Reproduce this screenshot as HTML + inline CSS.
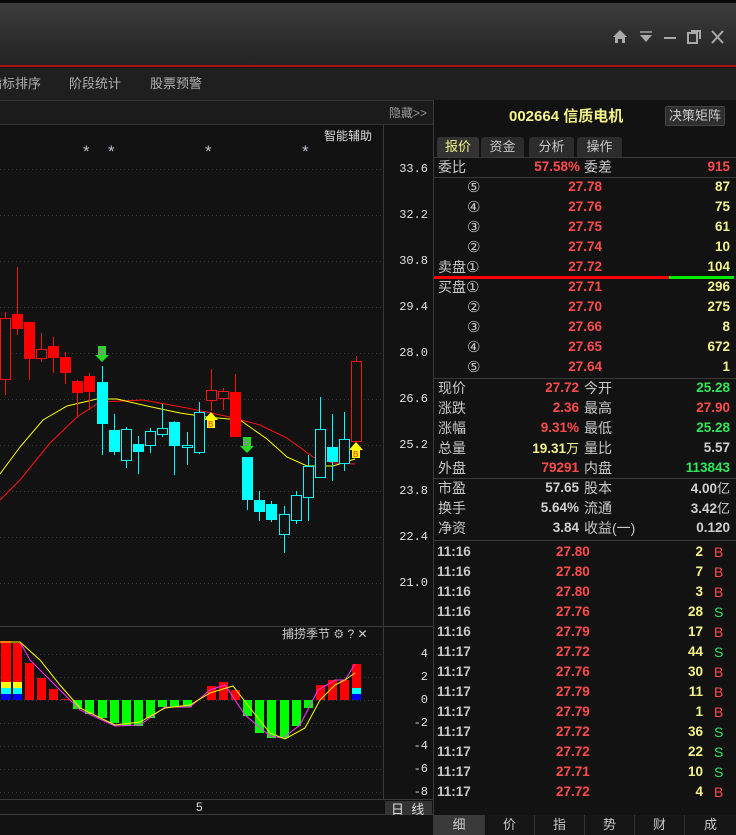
<!DOCTYPE html>
<html><head><meta charset="utf-8">
<style>
*{margin:0;padding:0;box-sizing:border-box}
body{width:736px;height:835px;background:#121212;overflow:hidden;position:relative;font-family:"Liberation Sans","Noto Sans CJK SC","DejaVu Sans",sans-serif;}
.a{position:absolute;white-space:nowrap}
.tb{left:0;top:0;width:736px;height:66px;background:linear-gradient(#3c3c3c,#222);border-top:3px solid #080808}
.menu{left:0;top:68px;width:736px;height:32px;background:#1f1f1f;color:#b0b0b0;font-size:13px;line-height:32px}
.rp{left:433px;top:100px;width:303px;height:735px;background:#121212;border-left:1px solid #3a3a3a}
.row{position:absolute;left:433px;width:303px;height:20px;line-height:20px;font-size:14px}
.row span{position:absolute;top:0;white-space:nowrap}
.row span span{position:static}
.l{left:5px;color:#c8c8c8}
.c{left:34px;color:#c8c8c8;font-family:"DejaVu Sans",sans-serif;font-size:15px}
.p{right:134px;color:#ff4b4b;font-weight:bold;font-size:13.5px}
.v{right:6px;color:#f3f38a;font-weight:bold;font-size:13.5px}
.p2{right:157px;font-weight:bold;font-size:13.5px}
.l2{left:151px;color:#c8c8c8}
.u{font-weight:normal;font-size:13px;font-family:"Noto Sans CJK SC",sans-serif}
.red{color:#ff4b4b}.grn{color:#2ee85a}.yel{color:#f3f38a}.wht{color:#d0d0d0}
.t{left:4px;color:#c8c8c8;font-weight:bold;font-size:13.5px}
.tp{left:123px;color:#ff4b4b;font-weight:bold;font-size:13.5px}
.tv{right:33px;color:#f3f38a;font-weight:bold;font-size:13.5px}
.bs{left:281px;font-size:14px}
.hl{position:absolute;left:433px;width:303px;height:1px;background:#3a3a3a}
.ax{color:#e0e0e0;font-size:12px;right:308px;font-family:"Liberation Mono",monospace}
.tab{position:absolute;top:137px;height:20px;background:#2c2c2c;color:#c8c8c8;font-size:13px;line-height:20px;text-align:center;border-radius:3px 3px 0 0}
.bt{position:absolute;top:815px;height:20px;width:50px;color:#c8c8c8;font-size:13px;line-height:20px;text-align:center;background:#161616;border-left:1px solid #333}
</style></head><body>
<div class="a tb"></div>
<div class="a" style="left:0;top:65px;width:736px;height:2px;background:#b01010"></div>
<svg class="a" style="left:608px;top:26px" width="128" height="24" viewBox="0 0 128 24">
<path d="M5 11 L12 4 L19 11 L17 11 L17 17 L14 17 L14 13 L10 13 L10 17 L7 17 L7 11Z" fill="#aaa"/>
<rect x="32" y="5" width="12" height="2" fill="#888"/><path d="M32 9 L44 9 L38 16Z" fill="#aaa"/>
<rect x="56" y="11" width="12" height="2" fill="#aaa"/>
<rect x="80" y="7" width="9" height="10" fill="none" stroke="#aaa" stroke-width="2"/><path d="M83 5 L92 5 L92 13" fill="none" stroke="#aaa" stroke-width="2"/>
<path d="M104 5 L115 17 M115 5 L104 17" stroke="#aaa" stroke-width="2"/>
</svg>
<div class="a menu"><span class="a" style="left:-11px">指标排序</span><span class="a" style="left:69px">阶段统计</span><span class="a" style="left:150px">股票预警</span></div>
<div class="a" style="left:0;top:100px;width:433px;height:25px;background:#1b1b1b;border-top:1px solid #333;border-bottom:1px solid #333"></div>
<div class="a" style="left:389px;top:104px;color:#999;font-size:12px">隐藏&gt;&gt;</div>

<svg class="a" style="left:0;top:0" width="433" height="835">
<g stroke="#3a3a3a" stroke-dasharray="1,3">
<line x1="0" x2="381" y1="169.5" y2="169.5"/><line x1="0" x2="381" y1="215.5" y2="215.5"/><line x1="0" x2="381" y1="261.5" y2="261.5"/><line x1="0" x2="381" y1="307.5" y2="307.5"/><line x1="0" x2="381" y1="353.5" y2="353.5"/><line x1="0" x2="381" y1="399.5" y2="399.5"/><line x1="0" x2="381" y1="445.5" y2="445.5"/><line x1="0" x2="381" y1="491.5" y2="491.5"/><line x1="0" x2="381" y1="537.5" y2="537.5"/><line x1="0" x2="381" y1="583.5" y2="583.5"/>
<line x1="0" x2="381" y1="654.5" y2="654.5"/><line x1="0" x2="381" y1="677.5" y2="677.5"/><line x1="0" x2="381" y1="700.5" y2="700.5"/><line x1="0" x2="381" y1="723.5" y2="723.5"/><line x1="0" x2="381" y1="746.5" y2="746.5"/><line x1="0" x2="381" y1="769.5" y2="769.5"/><line x1="0" x2="381" y1="792.5" y2="792.5"/>
</g>
<line x1="383.5" x2="383.5" y1="125" y2="800" stroke="#3a3a3a"/>
<line x1="0" x2="433" y1="626.5" y2="626.5" stroke="#3a3a3a"/>
<line x1="0" x2="433" y1="799.5" y2="799.5" stroke="#3a3a3a"/>
<line x1="0" x2="433" y1="814.5" y2="814.5" stroke="#3a3a3a"/>
<g fill="#bbc" font-size="17" font-family="Liberation Sans"><text x="83" y="157">*</text><text x="108" y="157">*</text><text x="205" y="157">*</text><text x="302" y="157">*</text></g>
<polyline fill="none" stroke="#ff1010" points="0,500 20,480 50,443 77,417 100,402 143,400 187,408 230,417 260,425 287,438 313,457 333,463 355,464"/>
<polyline fill="none" stroke="#ffff00" points="0,474 20,447 43,420 67,406 97,399 117,399 147,406 180,413 207,417 240,420 267,439 287,457 307,466 333,466 355,459"/>
<g stroke="#ff1010">
<line x1="5.5" x2="5.5" y1="312" y2="395"/><line x1="17.5" x2="17.5" y1="267" y2="335"/><line x1="29.5" x2="29.5" y1="322" y2="380"/><line x1="41.5" x2="41.5" y1="333" y2="362"/><line x1="53.5" x2="53.5" y1="337" y2="373"/><line x1="65.5" x2="65.5" y1="352" y2="384"/><line x1="77.5" x2="77.5" y1="380" y2="416"/><line x1="89.5" x2="89.5" y1="373" y2="410"/>
<line x1="211.5" x2="211.5" y1="369" y2="411"/><line x1="223.5" x2="223.5" y1="388" y2="410"/><line x1="235.5" x2="235.5" y1="374" y2="437"/><line x1="356.5" x2="356.5" y1="356" y2="441"/>
</g>
<g stroke="#00ffff">
<line x1="102.5" x2="102.5" y1="366" y2="455"/><line x1="114.5" x2="114.5" y1="414" y2="455"/><line x1="126.5" x2="126.5" y1="427" y2="468"/><line x1="138.5" x2="138.5" y1="436" y2="474"/><line x1="150.5" x2="150.5" y1="428" y2="453"/><line x1="162.5" x2="162.5" y1="404" y2="437"/><line x1="174.5" x2="174.5" y1="421" y2="475"/><line x1="187.5" x2="187.5" y1="432" y2="465"/><line x1="199.5" x2="199.5" y1="402" y2="454"/>
<line x1="247.5" x2="247.5" y1="457" y2="510"/><line x1="259.5" x2="259.5" y1="491" y2="521"/><line x1="271.5" x2="271.5" y1="501" y2="522"/><line x1="284.5" x2="284.5" y1="506" y2="553"/><line x1="296.5" x2="296.5" y1="491" y2="524"/><line x1="308.5" x2="308.5" y1="455" y2="521"/><line x1="320.5" x2="320.5" y1="397" y2="477"/><line x1="332.5" x2="332.5" y1="414" y2="481"/><line x1="344.5" x2="344.5" y1="412" y2="471"/>
</g>
<g fill="#ff0000">
<rect x="12" y="314" width="11" height="15"/><rect x="24" y="322" width="11" height="37"/><rect x="48" y="346" width="11" height="12"/><rect x="60" y="357" width="11" height="16"/><rect x="72" y="381" width="11" height="12"/><rect x="84" y="376" width="11" height="16"/><rect x="230" y="392" width="11" height="45"/>
</g>
<g fill="#121212" stroke="#ff1010">
<rect x="0.5" y="318.5" width="10" height="61"/><rect x="36.5" y="349.5" width="10" height="9"/><rect x="206.5" y="390.5" width="10" height="10"/><rect x="218.5" y="391.5" width="10" height="7"/><rect x="351.5" y="361.5" width="10" height="80"/>
</g>
<g fill="#00ffff">
<rect x="97" y="382" width="11" height="42"/><rect x="109" y="430" width="11" height="22"/><rect x="133" y="444" width="11" height="8"/><rect x="169" y="422" width="11" height="24"/><rect x="242" y="457" width="11" height="43"/><rect x="254" y="500" width="11" height="12"/><rect x="266" y="504" width="11" height="16"/><rect x="327" y="447" width="11" height="15"/>
</g>
<g fill="#121212" stroke="#00ffff">
<rect x="121.5" y="429.5" width="10" height="31"/><rect x="145.5" y="431.5" width="10" height="14"/><rect x="157.5" y="428.5" width="10" height="6"/><rect x="182.5" y="445.5" width="10" height="2"/><rect x="194.5" y="412.5" width="10" height="40"/><rect x="279.5" y="514.5" width="10" height="20"/><rect x="291.5" y="495.5" width="10" height="25"/><rect x="303.5" y="466.5" width="10" height="31"/><rect x="315.5" y="429.5" width="10" height="48"/><rect x="339.5" y="439.5" width="10" height="24"/>
</g>
<g><rect x="98" y="346" width="8" height="9" fill="#22dd22"/><path d="M95 355 L109 355 L102 362Z" fill="#22dd22"/><text x="98" y="355" font-size="9" fill="#e040e0" font-family="Liberation Sans">S</text></g>
<g><rect x="243" y="437" width="8" height="9" fill="#22dd22"/><path d="M240 446 L254 446 L247 453Z" fill="#22dd22"/><text x="243" y="446" font-size="9" fill="#e040e0" font-family="Liberation Sans">S</text></g>
<g><path d="M204 420 L211 412 L218 420Z" fill="#ffff00"/><rect x="207" y="420" width="8" height="8" fill="#ffff00"/><text x="208" y="427" font-size="8" fill="#ff2020" font-family="Liberation Sans">B</text></g>
<g><path d="M349 450 L356 442 L363 450Z" fill="#ffff00"/><rect x="352" y="450" width="8" height="8" fill="#ffff00"/><text x="353" y="457" font-size="8" fill="#ff2020" font-family="Liberation Sans">B</text></g>
<g fill="#ff0000">
<rect x="1" y="641" width="10" height="59"/><rect x="13" y="643" width="9" height="57"/><rect x="25" y="663" width="9" height="37"/><rect x="37" y="678" width="9" height="22"/><rect x="49" y="689" width="9" height="11"/><rect x="61" y="699" width="9" height="1"/>
<rect x="207" y="686" width="9" height="14"/><rect x="219" y="682" width="9" height="18"/><rect x="231" y="690" width="9" height="10"/><rect x="316" y="685" width="9" height="15"/><rect x="328" y="680" width="9" height="20"/><rect x="340" y="680" width="9" height="20"/><rect x="352" y="664" width="9" height="36"/>
</g>
<g fill="#ffff00"><rect x="1" y="682" width="10" height="6"/><rect x="13" y="682" width="9" height="6"/></g>
<g fill="#00ffff"><rect x="1" y="688" width="10" height="6"/><rect x="13" y="688" width="9" height="6"/><rect x="352" y="688" width="9" height="6"/></g>
<g fill="#0000ff"><rect x="1" y="694" width="10" height="6"/><rect x="13" y="694" width="9" height="6"/><rect x="352" y="694" width="9" height="6"/></g>
<g fill="#00ff00">
<rect x="73" y="700" width="9" height="9"/><rect x="85" y="700" width="9" height="14"/><rect x="98" y="700" width="9" height="18"/><rect x="110" y="700" width="9" height="23"/><rect x="122" y="700" width="9" height="26"/><rect x="134" y="700" width="9" height="26"/><rect x="146" y="700" width="9" height="18"/><rect x="158" y="700" width="9" height="7"/><rect x="170" y="700" width="9" height="7"/><rect x="183" y="700" width="9" height="7"/>
<rect x="243" y="700" width="9" height="16"/><rect x="255" y="700" width="9" height="33"/><rect x="267" y="700" width="9" height="38"/><rect x="280" y="700" width="9" height="38"/><rect x="292" y="700" width="9" height="26"/><rect x="304" y="700" width="9" height="8"/>
</g>
<polyline fill="none" stroke="#ff30ff" points="0,642 20,642 30,660 50,680 80,710 115,726 140,725 165,707 190,707 210,690 225,685 245,715 270,736 283,738 300,725 318,690 335,680 345,680 355,664"/>
<polyline fill="none" stroke="#ffff00" points="0,642 20,642 40,660 60,685 80,708 115,725 140,722 165,708 190,705 210,693 233,686 250,708 270,733 285,739 305,728 320,700 335,685 345,680 355,673"/>
<rect x="385" y="801" width="47" height="13" fill="#333"/>
</svg>
<div class="a" style="left:324px;top:127px;color:#ddd;font-size:12px">智能辅助</div>
<div class="a" style="left:282px;top:625px;color:#ccc;font-size:12px">捕捞季节 <span style="color:#bbb">⚙</span> ? ✕</div>
<div class="a ax" style="top:162px">33.6</div><div class="a ax" style="top:208px">32.2</div><div class="a ax" style="top:254px">30.8</div><div class="a ax" style="top:300px">29.4</div><div class="a ax" style="top:346px">28.0</div><div class="a ax" style="top:392px">26.6</div><div class="a ax" style="top:438px">25.2</div><div class="a ax" style="top:484px">23.8</div><div class="a ax" style="top:530px">22.4</div><div class="a ax" style="top:576px">21.0</div>
<div class="a ax" style="top:647px">4</div><div class="a ax" style="top:670px">2</div><div class="a ax" style="top:693px">0</div><div class="a ax" style="top:716px">-2</div><div class="a ax" style="top:739px">-4</div><div class="a ax" style="top:762px">-6</div><div class="a ax" style="top:785px">-8</div>
<div class="a" style="left:196px;top:800px;color:#ddd;font-size:12px">5</div>
<div class="a" style="left:391px;top:799px;color:#ddd;font-size:13px">日&nbsp;&nbsp;线</div>

<div class="a rp"></div>
<div class="a" style="left:509px;top:105px;color:#f3f38a;font-size:15px;font-weight:bold">002664 信质电机</div>
<div class="a" style="left:665px;top:106px;width:60px;height:20px;background:#2e2e2e;border:1px solid #444;border-radius:2px;color:#ccc;font-size:13px;line-height:18px;text-align:center">决策矩阵</div>
<div class="tab" style="left:437px;width:42px;color:#f3f38a;background:#333">报价</div>
<div class="tab" style="left:481px;width:43px">资金</div>
<div class="tab" style="left:529px;width:45px">分析</div>
<div class="tab" style="left:577px;width:45px">操作</div>
<div class="hl" style="top:157px"></div>

<div class="row" style="top:157px"><span class="l">委比</span><span class="p" style="right:156px">57.58%</span><span class="l2">委差</span><span class="v" style="color:#ff4b4b">915</span></div>
<div class="hl" style="top:177px"></div>
<div class="row" style="top:177px"><span class="c">⑤</span><span class="p">27.78</span><span class="v">87</span></div>
<div class="row" style="top:197px"><span class="c">④</span><span class="p">27.76</span><span class="v">75</span></div>
<div class="row" style="top:217px"><span class="c">③</span><span class="p">27.75</span><span class="v">61</span></div>
<div class="row" style="top:237px"><span class="c">②</span><span class="p">27.74</span><span class="v">10</span></div>
<div class="row" style="top:257px"><span class="l">卖盘<span style="font-family:'DejaVu Sans';font-size:15px">①</span></span><span class="p">27.72</span><span class="v">104</span></div>
<div class="a" style="left:434px;top:276px;width:235px;height:3px;background:#f00"></div>
<div class="a" style="left:669px;top:276px;width:65px;height:3px;background:#0e0"></div>
<div class="row" style="top:277px"><span class="l">买盘<span style="font-family:'DejaVu Sans';font-size:15px">①</span></span><span class="p">27.71</span><span class="v">296</span></div>
<div class="row" style="top:297px"><span class="c">②</span><span class="p">27.70</span><span class="v">275</span></div>
<div class="row" style="top:317px"><span class="c">③</span><span class="p">27.66</span><span class="v">8</span></div>
<div class="row" style="top:337px"><span class="c">④</span><span class="p">27.65</span><span class="v">672</span></div>
<div class="row" style="top:357px"><span class="c">⑤</span><span class="p">27.64</span><span class="v">1</span></div>
<div class="hl" style="top:378px"></div>
<div class="row" style="top:378px"><span class="l">现价</span><span class="p2 red">27.72</span><span class="l2">今开</span><span class="v grn">25.28</span></div>
<div class="row" style="top:398px"><span class="l">涨跌</span><span class="p2 red">2.36</span><span class="l2">最高</span><span class="v red">27.90</span></div>
<div class="row" style="top:418px"><span class="l">涨幅</span><span class="p2 red">9.31%</span><span class="l2">最低</span><span class="v grn">25.28</span></div>
<div class="row" style="top:438px"><span class="l">总量</span><span class="p2 yel">19.31<span class="u">万</span></span><span class="l2">量比</span><span class="v wht">5.57</span></div>
<div class="row" style="top:458px"><span class="l">外盘</span><span class="p2 red">79291</span><span class="l2">内盘</span><span class="v grn">113843</span></div>
<div class="hl" style="top:478px"></div>
<div class="row" style="top:478px"><span class="l">市盈</span><span class="p2 wht">57.65</span><span class="l2">股本</span><span class="v wht">4.00<span class="u">亿</span></span></div>
<div class="row" style="top:498px"><span class="l">换手</span><span class="p2 wht">5.64%</span><span class="l2">流通</span><span class="v wht">3.42<span class="u">亿</span></span></div>
<div class="row" style="top:518px"><span class="l">净资</span><span class="p2 wht">3.84</span><span class="l2">收益(一)</span><span class="v wht">0.120</span></div>
<div class="hl" style="top:540px"></div>
<div class="row" style="top:542px"><span class="t">11:16</span><span class="tp">27.80</span><span class="tv">2</span><span class="bs red">B</span></div>
<div class="row" style="top:562px"><span class="t">11:16</span><span class="tp">27.80</span><span class="tv">7</span><span class="bs red">B</span></div>
<div class="row" style="top:582px"><span class="t">11:16</span><span class="tp">27.80</span><span class="tv">3</span><span class="bs red">B</span></div>
<div class="row" style="top:602px"><span class="t">11:16</span><span class="tp">27.76</span><span class="tv">28</span><span class="bs grn">S</span></div>
<div class="row" style="top:622px"><span class="t">11:16</span><span class="tp">27.79</span><span class="tv">17</span><span class="bs red">B</span></div>
<div class="row" style="top:642px"><span class="t">11:17</span><span class="tp">27.72</span><span class="tv">44</span><span class="bs grn">S</span></div>
<div class="row" style="top:662px"><span class="t">11:17</span><span class="tp">27.76</span><span class="tv">30</span><span class="bs red">B</span></div>
<div class="row" style="top:682px"><span class="t">11:17</span><span class="tp">27.79</span><span class="tv">11</span><span class="bs red">B</span></div>
<div class="row" style="top:702px"><span class="t">11:17</span><span class="tp">27.79</span><span class="tv">1</span><span class="bs red">B</span></div>
<div class="row" style="top:722px"><span class="t">11:17</span><span class="tp">27.72</span><span class="tv">36</span><span class="bs grn">S</span></div>
<div class="row" style="top:742px"><span class="t">11:17</span><span class="tp">27.72</span><span class="tv">22</span><span class="bs grn">S</span></div>
<div class="row" style="top:762px"><span class="t">11:17</span><span class="tp">27.71</span><span class="tv">10</span><span class="bs grn">S</span></div>
<div class="row" style="top:782px"><span class="t">11:17</span><span class="tp">27.72</span><span class="tv">4</span><span class="bs red">B</span></div>
<div class="bt" style="left:434px;background:#3a3a3a;border:none">细</div>
<div class="bt" style="left:484px">价</div>
<div class="bt" style="left:534px">指</div>
<div class="bt" style="left:584px">势</div>
<div class="bt" style="left:634px">财</div>
<div class="bt" style="left:684px;width:52px">成</div>
</body></html>
